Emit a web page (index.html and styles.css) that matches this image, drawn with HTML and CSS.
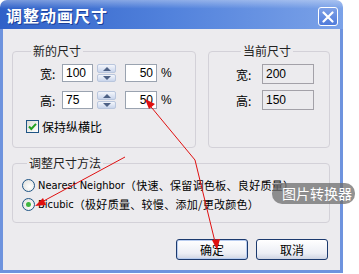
FILE: index.html
```html
<!DOCTYPE html>
<html lang="zh">
<head>
    <meta charset="UTF-8">
    <title>调整动画尺寸</title>
    <link rel="stylesheet" href="styles.css">
</head>
<body>
    <div class="window">
        <div class="titlebar">
            <span class="title">调整动画尺寸</span>
            <span class="close">
                <svg width="12" height="12" viewBox="0 0 12 12"><path d="M1.5 1.5 L10.5 10.5 M10.5 1.5 L1.5 10.5" stroke="#fff" stroke-width="2.2" stroke-linecap="round"/></svg>
            </span>
        </div>
        <div class="client">
            <div class="groups">
                <fieldset class="group new-size">
                    <legend>新的尺寸</legend>
                    <div class="row">
                        <span class="lbl">宽:</span>
                        <input class="num" type="text" value="100">
                        <span class="spin"><span class="up"></span><span class="down"></span></span>
                        <input class="pct" type="text" value="50">
                        <span class="unit">%</span>
                    </div>
                    <div class="row">
                        <span class="lbl">高:</span>
                        <input class="num" type="text" value="75">
                        <span class="spin"><span class="up"></span><span class="down"></span></span>
                        <input class="pct" type="text" value="50">
                        <span class="unit">%</span>
                    </div>
                    <label class="check">
                        <span class="box">
                            <svg width="11" height="11" viewBox="0 0 11 11"><path d="M2 5.5 L4.3 8 L9 2.8" fill="none" stroke="#21a121" stroke-width="2"/></svg>
                        </span>
                        保持纵横比
                    </label>
                </fieldset>
                <fieldset class="group cur-size">
                    <legend>当前尺寸</legend>
                    <div class="row">
                        <span class="lbl">宽:</span>
                        <input class="ro" type="text" value="200" readonly>
                    </div>
                    <div class="row">
                        <span class="lbl">高:</span>
                        <input class="ro" type="text" value="150" readonly>
                    </div>
                </fieldset>
            </div>
            <fieldset class="group method">
                <legend>调整尺寸方法</legend>
                <div class="radio-row"><span class="radio"></span><span class="latin">Nearest Neighbor</span><span class="cjk">（快速、保留调色板、良好质量）</span></div>
                <div class="radio-row"><span class="radio on"></span><span class="latin">Bicubic</span><span class="cjk">（极好质量、较慢、添加/更改颜色）</span></div>
            </fieldset>
            <div class="buttons">
                <button class="btn default">确定</button>
                <button class="btn">取消</button>
            </div>
        </div>
    </div>

    <div class="watermark">图片转换器</div>

    <svg class="marks" width="359" height="274" viewBox="0 0 359 274">
        <g stroke="#e01010" stroke-width="1" fill="none">
            <path d="M195 160 L147 102"/>
            <path d="M195 160 L216 246"/>
            <path d="M125 157 L38 204"/>
        </g>
        <g fill="#e01010">
            <path d="M145 99 L155 104 L149 109 Z"/>
            <path d="M217 250 L212 240 L220 239 Z"/>
            <path d="M35 206 L43 198 L46 205 Z"/>
        </g>
    </svg>
</body>
</html>
```

FILE: styles.css
```css
body {
    margin: 0;
    background: #fff;
    font-family: "Liberation Sans", "Noto Sans CJK SC", sans-serif;
    font-size: 12px;
    color: #000;
}

.window {
    width: 343px;
}

.titlebar {
    height: 29px;
    box-sizing: border-box;
    display: flex;
    align-items: center;
    justify-content: space-between;
    padding: 4px 5px 0 6px;
    border-radius: 7px 7px 0 0;
    background: linear-gradient(to bottom, rgba(255,255,255,0.35), rgba(255,255,255,0) 30%),
                linear-gradient(to right, #2f61c8, #5282dc 50%, #7ba2e8);
}
.title {
    color: #fff;
    font-family: "Noto Sans CJK SC", sans-serif;
    font-size: 16px;
    font-weight: bold;
    letter-spacing: 1px;
    margin-top: -3px;
    text-shadow: 1px 1px 0 #1c3f98;
}
.close {
    width: 20px;
    height: 19px;
    box-sizing: border-box;
    display: flex;
    align-items: center;
    justify-content: center;
    border: 1px solid #fff;
    border-radius: 3px;
    background: linear-gradient(to bottom, #7ea0e6, #4f7bdb);
}

.client {
    height: 244px;
    box-sizing: border-box;
    background: #ecebee;
    border: 3px solid #6e93de;
    border-top: none;
    padding: 14px 10px 0 9px;
}

.groups {
    display: flex;
    gap: 12px;
}

.group {
    margin: 0;
    border: 1px solid #d3d1d8;
    border-radius: 4px;
    box-sizing: border-box;
}
.group legend {
    padding: 0 2px;
    margin-left: 5px;
    line-height: 16px;
    color: #222;
    font-family: "Noto Sans CJK SC", sans-serif;
}

.new-size {
    width: 184px;
    padding: 5px 10px 14px 13px;
}
.cur-size {
    width: 122px;
    padding: 5px 10px 10px 27px;
}

.row {
    display: flex;
    align-items: center;
    height: 18px;
}
.new-size .row {
    margin-left: 14px;
}
.new-size .row + .row {
    margin-top: 9px;
}
.cur-size .row {
    height: 20px;
}
.cur-size .row + .row {
    margin-top: 6px;
}

.lbl {
    width: 22px;
    font-family: "Noto Sans CJK SC", sans-serif;
}
.cur-size .lbl {
    width: 26px;
}

input {
    box-sizing: border-box;
    height: 18px;
    margin: 0;
    padding: 0 3px;
    border: 1px solid #9aa3b0;
    background: #fff;
    font-family: "Liberation Sans", sans-serif;
    font-size: 12px;
}
.num {
    width: 31px;
}
.pct {
    width: 32px;
    margin-left: 9px;
    text-align: right;
}
.ro {
    width: 52px;
    height: 20px;
    background: #ecebee;
    border-color: #a3a1a8;
}
.unit {
    margin-left: 4px;
}

.spin {
    width: 19px;
    height: 18px;
    margin-left: 4px;
    display: flex;
    flex-direction: column;
    gap: 1px;
}
.spin span {
    flex: 1;
    position: relative;
    border: 1px solid #b9c6dd;
    border-radius: 2px;
    background: linear-gradient(to bottom, #f4f6fb, #c9d5ec);
}
.spin span::after {
    content: "";
    position: absolute;
    left: 5px;
    top: 2px;
    border-left: 4px solid transparent;
    border-right: 4px solid transparent;
}
.spin .up::after {
    border-bottom: 4px solid #4d6185;
}
.spin .down::after {
    top: 1px;
    border-top: 4px solid #4d6185;
}

.check {
    display: flex;
    align-items: center;
    gap: 3px;
    height: 14px;
    margin-top: 10px;
    font-family: "Noto Sans CJK SC", sans-serif;
    font-size: 12px;
}
.box {
    width: 13px;
    height: 13px;
    box-sizing: border-box;
    display: flex;
    align-items: center;
    justify-content: center;
    border: 1px solid #1f5585;
    background: linear-gradient(to bottom right, #dcdcd6, #fff);
}

.method {
    width: 318px;
    margin-top: 7px;
    padding: 6px 9px 10px 9px;
}
.radio-row {
    display: flex;
    align-items: center;
    height: 16px;
    white-space: nowrap;
}
.radio-row + .radio-row {
    margin-top: 3px;
}
.latin {
    font-family: "DejaVu Sans Condensed", "Liberation Sans Narrow", sans-serif;
    font-size: 11px;
}
.cjk {
    font-family: "Noto Sans CJK SC", sans-serif;
    font-size: 11px;
    letter-spacing: 0.3px;
}
.radio {
    width: 13px;
    height: 13px;
    box-sizing: border-box;
    margin-right: 3px;
    border: 1px solid #1f5585;
    border-radius: 50%;
    background: radial-gradient(circle at 60% 60%, #fff, #dcdcd6);
    position: relative;
}
.radio.on::after {
    content: "";
    position: absolute;
    left: 3px;
    top: 3px;
    width: 5px;
    height: 5px;
    border-radius: 50%;
    background: #3fb53f;
}

.buttons {
    display: flex;
    justify-content: flex-end;
    gap: 8px;
    margin-top: 16px;
    margin-right: 2px;
}
.btn {
    width: 72px;
    height: 21px;
    padding: 0;
    border: 1px solid #1c3a6e;
    border-radius: 3px;
    background: linear-gradient(to bottom, #ffffff, #eceef5 70%, #cfd4e3);
    font-family: "Noto Sans CJK SC", sans-serif;
    font-size: 12px;
    color: #000;
}
.btn.default {
    box-shadow: inset 0 0 0 1px #b9cdf0;
}

.watermark {
    position: absolute;
    left: 272px;
    top: 183px;
    width: 83px;
    height: 21px;
    box-sizing: border-box;
    padding-left: 10px;
    border-radius: 10px;
    background: rgba(110, 110, 110, 0.75);
    color: #fff;
    font-family: "Noto Sans CJK SC", sans-serif;
    font-size: 14px;
    line-height: 21px;
    white-space: nowrap;
}

.marks {
    position: absolute;
    left: 0;
    top: 0;
    pointer-events: none;
}
```
